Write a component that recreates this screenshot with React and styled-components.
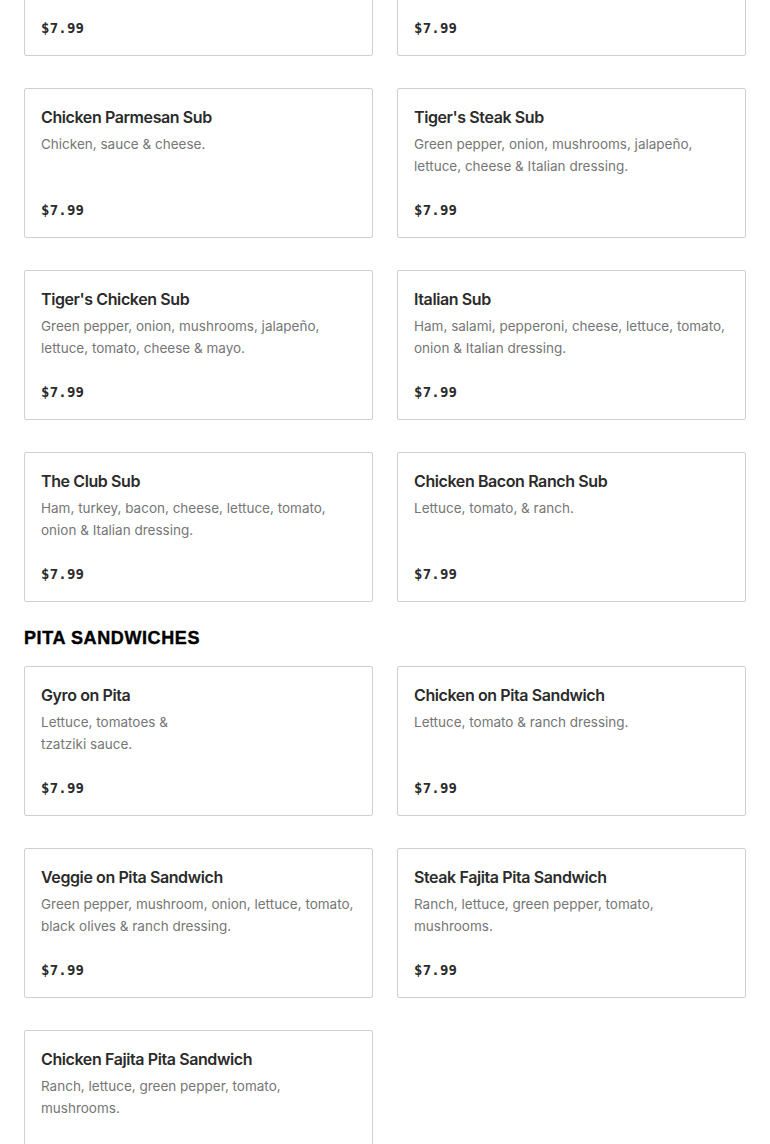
import React from "react";
import styled, { createGlobalStyle } from "styled-components";

const Global = createGlobalStyle`
  html, body { margin: 0; padding: 0; background: #fff; }
  body { font-family: Inter, "Liberation Sans", sans-serif; overflow: hidden; }
`;

const Page = styled.div`
  padding: 0 24px;
  margin-top: -94px;
`;

const Section = styled.section`
  display: flex;
  flex-direction: column;
`;

const SectionTitle = styled.h2`
  margin: 24px 0 16px;
  font-family: "Liberation Sans", Arial, sans-serif;
  font-weight: 700;
  font-size: 18px;
  line-height: 24px;
  letter-spacing: 0.6px;
  -webkit-text-stroke: 0.4px #000;
  text-transform: uppercase;
  color: #000;
`;

const Grid = styled.div`
  display: grid;
  grid-template-columns: 1fr 1fr;
  column-gap: 24px;
  row-gap: 32px;
`;

const Card = styled.div`
  box-sizing: border-box;
  min-height: 150px;
  border: 1px solid #d0d0d0;
  border-radius: 2px;
  padding: 16px 16px 17px;
  display: flex;
  flex-direction: column;
`;

const Name = styled.div`
  font-weight: 600;
  font-size: 16px;
  line-height: 24px;
  letter-spacing: -0.4px;
  color: #2b2b2b;
`;

const Desc = styled.div`
  margin-top: 4px;
  font-size: 13.5px;
  line-height: 22px;
  color: #767676;
`;

const Price = styled.div`
  margin-top: auto;
  padding-top: 22px;
  font-family: "DejaVu Sans Mono", "Liberation Mono", monospace;
  font-weight: 700;
  font-size: 14px;
  line-height: 20px;
  letter-spacing: 0.2px;
  color: #2b2b2b;
`;

const subs = [
  { name: "Philly Cheesesteak Sub", desc: "Steak, onion, green pepper & cheese." },
  { name: "Turkey Sub", desc: "Turkey, lettuce, tomato, cheese & mayo." },
  { name: "Chicken Parmesan Sub", desc: "Chicken, sauce & cheese." },
  { name: "Tiger's Steak Sub", desc: "Green pepper, onion, mushrooms, jalapeño, lettuce, cheese & Italian dressing." },
  { name: "Tiger's Chicken Sub", desc: "Green pepper, onion, mushrooms, jalapeño, lettuce, tomato, cheese & mayo." },
  { name: "Italian Sub", desc: "Ham, salami, pepperoni, cheese, lettuce, tomato, onion & Italian dressing." },
  { name: "The Club Sub", desc: "Ham, turkey, bacon, cheese, lettuce, tomato, onion & Italian dressing." },
  { name: "Chicken Bacon Ranch Sub", desc: "Lettuce, tomato, & ranch." },
];

const pitas = [
  { name: "Gyro on Pita", desc: ["Lettuce, tomatoes &", "tzatziki sauce."] },
  { name: "Chicken on Pita Sandwich", desc: "Lettuce, tomato & ranch dressing." },
  { name: "Veggie on Pita Sandwich", desc: "Green pepper, mushroom, onion, lettuce, tomato, black olives & ranch dressing." },
  { name: "Steak Fajita Pita Sandwich", desc: "Ranch, lettuce, green pepper, tomato, mushrooms." },
  { name: "Chicken Fajita Pita Sandwich", desc: "Ranch, lettuce, green pepper, tomato, mushrooms." },
];

function Item({ name, desc }) {
  return (
    <Card>
      <Name>{name}</Name>
      <Desc>
        {Array.isArray(desc)
          ? desc.map((l, i) => (
              <React.Fragment key={i}>
                {i > 0 && <br />}
                {l}
              </React.Fragment>
            ))
          : desc}
      </Desc>
      <Price>$7.99</Price>
    </Card>
  );
}

export default function App() {
  return (
    <>
      <Global />
      <Page>
        <Section>
          <Grid>
            {subs.map((s) => (
              <Item key={s.name} {...s} />
            ))}
          </Grid>
        </Section>
        <Section>
          <SectionTitle>Pita Sandwiches</SectionTitle>
          <Grid>
            {pitas.map((s) => (
              <Item key={s.name} {...s} />
            ))}
          </Grid>
        </Section>
      </Page>
    </>
  );
}
